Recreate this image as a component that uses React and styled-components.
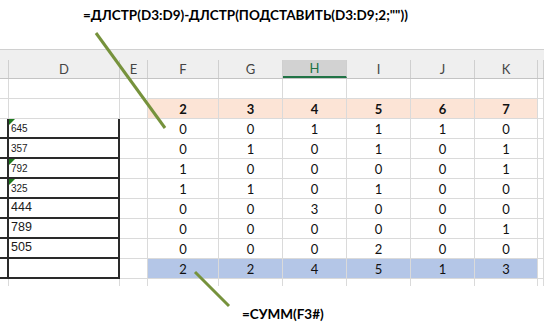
import React from 'react';
import styled, { createGlobalStyle, css } from 'styled-components';

const GlobalStyle = createGlobalStyle`
  html, body {
    margin: 0;
    padding: 0;
    background: #fff;
  }
`;

const COLS = '9px 111px 28px 71px 64px 64px 64px 64px 63px 1fr';
const GRID = '#dadada';
const BOX = '#2a2a2a';

const Page = styled.div`
  position: relative;
  width: 544px;
  height: 330px;
  overflow: hidden;
  background: #fff;
  font-family: Lato, 'Open Sans', sans-serif;
`;

const Formula = styled.div`
  height: 49px;
  box-sizing: border-box;
  padding: ${(p) => p.$top}px 0 0 ${(p) => p.$left}px;
  font-family: Lato, 'Open Sans', sans-serif;
  font-weight: 700;
  font-size: 13.5px;
  color: #000;
  white-space: nowrap;
`;

const Sheet = styled.div`
  display: flex;
  flex-direction: column;
`;

const HeaderBar = styled.div`
  display: grid;
  grid-template-columns: ${COLS};
  height: 30px;
  box-sizing: border-box;
  padding-top: 10px;
  background: #efefef;
  border-top: 1px solid #d0d0d0;
  border-bottom: 1px solid #c4c4c4;
`;

const ColHead = styled.div`
  display: flex;
  align-items: center;
  justify-content: center;
  box-sizing: border-box;
  border-right: 1px solid #cfcfcf;
  font-size: 13px;
  color: #444;
  ${(p) =>
    p.$active &&
    css`
      background: #d2d2d2;
      color: #217346;
      border-bottom: 2px solid #217346;
    `}
`;

const Row = styled.div`
  display: grid;
  grid-template-columns: ${COLS};
  height: ${(p) => p.$h || 20}px;
`;

const Cell = styled.div`
  position: relative;
  box-sizing: border-box;
  display: flex;
  align-items: center;
  justify-content: center;
  border-right: 1px solid ${GRID};
  border-bottom: ${(p) => (p.$open ? 'none' : `1px solid ${GRID}`)};
  background: ${(p) => p.$bg || 'transparent'};
  font-size: 13px;
  font-weight: ${(p) => (p.$bold ? 700 : 400)};
  color: #111;
  ${(p) =>
    p.$boxRight &&
    css`
      border-right: 2px solid ${BOX};
    `}
  ${(p) =>
    p.$boxBottom &&
    css`
      border-bottom: 2px solid ${BOX};
    `}
`;

const Stub = styled(Cell)`
  border-right: ${(p) => (p.$boxRight ? `2px solid ${BOX}` : `1px solid ${GRID}`)};
`;

const ValueCell = styled(Cell)`
  justify-content: flex-start;
  align-items: ${(p) => (p.$text ? 'flex-end' : 'flex-start')};
  padding: ${(p) => (p.$text ? '0 0 3px 2px' : '1px 0 0 2px')};
  font-family: 'Liberation Sans', Arial, sans-serif;
  font-size: ${(p) => (p.$text ? '10px' : '12.5px')};
  color: #1a1a1a;
`;

const TextFlag = styled.span`
  position: absolute;
  left: 0;
  top: 0;
  width: 0;
  height: 0;
  border-top: 6px solid #1f7a1f;
  border-right: 6px solid transparent;
`;

const Callouts = styled.svg`
  position: absolute;
  left: 0;
  top: 0;
  pointer-events: none;
`;

const letters = ['D', 'E', 'F', 'G', 'H', 'I', 'J', 'K'];

const rows = [
  { d: null, vals: null },
  { d: null, vals: [2, 3, 4, 5, 6, 7], bg: '#fce4d6', bold: true },
  { d: '645', text: true, flag: true, vals: [0, 0, 1, 1, 1, 0] },
  { d: '357', text: true, vals: [0, 1, 0, 1, 0, 1] },
  { d: '792', text: true, flag: true, vals: [1, 0, 0, 0, 0, 1] },
  { d: '325', text: true, flag: true, vals: [1, 1, 0, 1, 0, 0] },
  { d: '444', vals: [0, 0, 3, 0, 0, 0] },
  { d: '789', vals: [0, 0, 0, 0, 0, 1] },
  { d: '505', vals: [0, 0, 0, 2, 0, 0] },
  { d: '', vals: [2, 2, 4, 5, 1, 3], bg: '#b4c6e7' },
];

export default function App() {
  return (
    <Page>
      <GlobalStyle />
      <Formula $top={7} $left={83}>
        =ДЛСТР(D3:D9)-ДЛСТР(ПОДСТАВИТЬ(D3:D9;2;""))
      </Formula>
      <Sheet>
        <HeaderBar>
          <ColHead />
          {letters.map((l) => (
            <ColHead key={l} $active={l === 'H'}>
              {l}
            </ColHead>
          ))}
          <ColHead />
        </HeaderBar>
        {rows.map((r, i) => {
          const boxed = r.d !== null;
          return (
            <Row key={i}>
              <Stub $boxRight={boxed} $boxBottom={boxed} />
              <ValueCell $text={r.text} $boxRight={boxed} $boxBottom={boxed}>
                {r.flag && <TextFlag />}
                {r.d}
              </ValueCell>
              <Cell />
              {(r.vals || [null, null, null, null, null, null]).map((v, j) => (
                <Cell key={j} $bg={r.bg} $bold={r.bold}>
                  {v}
                </Cell>
              ))}
              <Cell />
            </Row>
          );
        })}
        <Row $h={7}>
          <Stub $open />
          <Cell $open />
          <Cell $open />
          <Cell $open />
          <Cell $open />
          <Cell $open />
          <Cell $open />
          <Cell $open />
          <Cell $open />
          <Cell $open />
        </Row>
      </Sheet>
      <Formula $top={20} $left={242}>
        =СУММ(F3#)
      </Formula>
      <Callouts width="544" height="330" viewBox="0 0 544 330">
        <line x1="96" y1="33" x2="165" y2="128" stroke="#76923c" strokeWidth="3" />
        <line x1="195" y1="272" x2="229" y2="306" stroke="#76923c" strokeWidth="3" />
      </Callouts>
    </Page>
  );
}
